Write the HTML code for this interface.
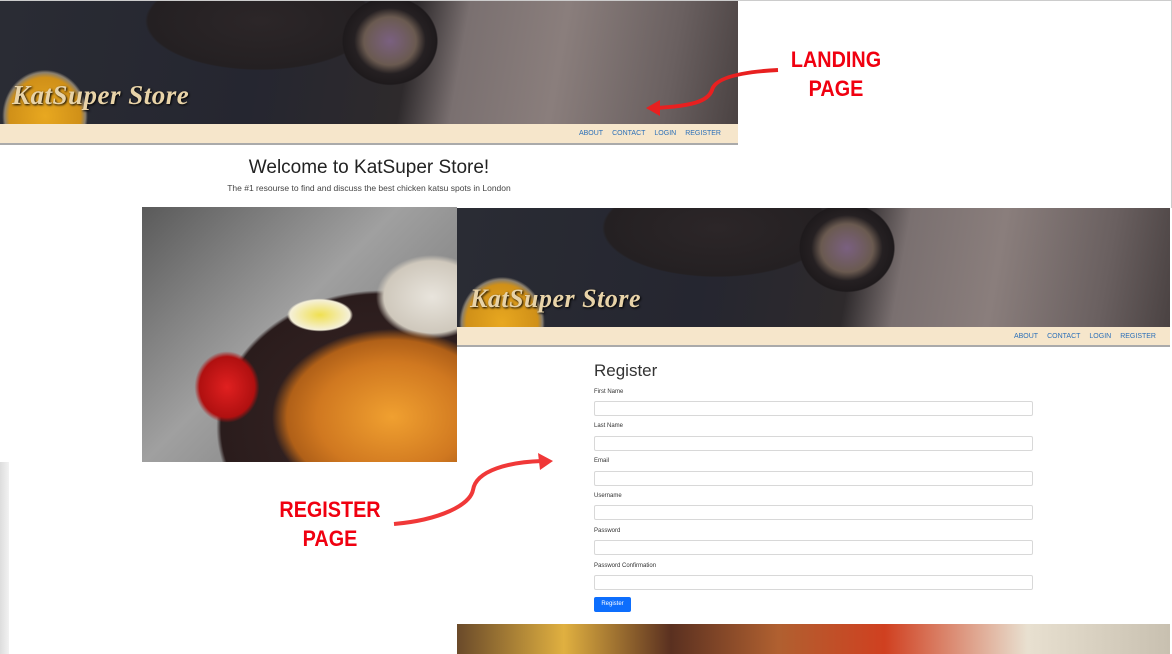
<!DOCTYPE html>
<html><head><meta charset="utf-8"><style>
*{margin:0;padding:0;box-sizing:border-box}
body{width:1172px;height:654px;position:relative;overflow:hidden;background:#fff;font-family:"Liberation Sans",sans-serif}
.abs{position:absolute}
.hdr{background:
radial-gradient(ellipse 65px 70px at 45px 115px,#e8a820 0,#d09018 55%,#8a8070 62%,transparent 66%),
radial-gradient(ellipse 65px 60px at 390px 40px,#7a6080 0,#6a5a50 40%,#252022 55%,#1e1a1c 72%,transparent 74%),
radial-gradient(ellipse 140px 60px at 260px 20px,#2c2628 0,#242022 80%,transparent 82%),
linear-gradient(100deg,#2a2c34 0,#252630 35%,#2e2a2c 55%,#7a7070 62%,#8a7e7c 75%,#6a6060 90%,#4a4242 100%);}
.logo{font-family:"Liberation Serif",serif;font-style:italic;font-weight:bold;color:#e8d3a8;letter-spacing:0.5px;text-shadow:1px 1px 2px #000}
.nav{background:#f6e6cb;border-bottom:2px solid #aaa;font-size:7px;color:#2a6fb8;text-align:right}
.nav span{margin-left:9px}
.red{color:#f00010;font-weight:bold;font-size:22px;text-align:center;line-height:29px;transform:scaleX(0.9)}
label{position:absolute;left:594px;font-size:6px;color:#333}
.in{position:absolute;left:594px;width:439px;height:15px;border:1px solid #d8d8d8;border-radius:2px;background:#fff}
</style></head><body>
<div class="abs" style="left:0;top:0;width:1172px;height:1px;background:#ccc"></div>
<div class="abs" style="left:1171px;top:0;width:1px;height:208px;background:#ccc"></div>
<div class="abs hdr" style="left:0;top:1px;width:738px;height:123px"></div>
<div class="abs logo" style="left:12px;top:80px;font-size:27px">KatSuper Store</div>
<div class="abs nav" style="left:0;top:124px;width:738px;height:21px;padding:6px 17px 0 0"><span>ABOUT</span><span>CONTACT</span><span>LOGIN</span><span>REGISTER</span></div>
<div class="abs" style="left:0;top:157px;width:738px;text-align:center;font-size:19px;color:#222">Welcome to KatSuper Store!</div>
<div class="abs" style="left:0;top:183px;width:738px;text-align:center;font-size:8.5px;color:#444">The #1 resourse to find and discuss the best chicken katsu spots in London</div>
<div class="abs" style="left:142px;top:207px;width:315px;height:255px;background:
radial-gradient(ellipse 60px 30px at 178px 108px,#f0e050 0,#f5f0d8 50%,transparent 55%),
radial-gradient(ellipse 50px 55px at 85px 180px,#e02020 0,#b01010 55%,transparent 65%),
radial-gradient(ellipse 150px 110px at 250px 210px,#f0a030 0,#d07820 50%,#b06018 70%,transparent 80%),
radial-gradient(ellipse 80px 60px at 290px 90px,#e8e4dc 0,#cfc8bc 60%,transparent 70%),
radial-gradient(ellipse 230px 190px at 240px 220px,#3a2626 0,#2a1c1c 70%,transparent 72%),
linear-gradient(135deg,#5a5a5a,#a0a0a0 45%,#6a6a6a)"></div>
<div class="abs" style="left:0;top:462px;width:9px;height:192px;background:linear-gradient(90deg,#ddd,#f2f2f2)"></div>
<div class="abs hdr" style="left:457px;top:208px;width:713px;height:119px"></div>
<div class="abs logo" style="left:470px;top:284px;font-size:26px">KatSuper Store</div>
<div class="abs nav" style="left:457px;top:327px;width:713px;height:20px;padding:6px 14px 0 0"><span>ABOUT</span><span>CONTACT</span><span>LOGIN</span><span>REGISTER</span></div>
<div class="abs" style="left:594px;top:361px;font-size:17px;color:#333">Register</div>
<label style="top:389px">First Name</label><div class="in" style="top:401px"></div>
<label style="top:423px">Last Name</label><div class="in" style="top:436px"></div>
<label style="top:458px">Email</label><div class="in" style="top:471px"></div>
<label style="top:493px">Username</label><div class="in" style="top:505px"></div>
<label style="top:528px">Password</label><div class="in" style="top:540px"></div>
<label style="top:563px">Password Confirmation</label><div class="in" style="top:575px"></div>
<div class="abs" style="left:594px;top:597px;width:37px;height:15px;background:#0d6efd;border-radius:2px;color:#fff;font-size:6px;text-align:center;line-height:15px">Register</div>
<div class="abs" style="left:457px;top:624px;width:713px;height:30px;background:linear-gradient(90deg,#6a4a2a,#e0b040 15%,#5a3020 30%,#b06030 45%,#d04020 60%,#e8e0d0 80%,#c8c0b0)"></div>
<div class="abs red" style="left:776px;top:45px;width:120px">LANDING<br>PAGE</div>
<div class="abs red" style="left:260px;top:495px;width:140px">REGISTER<br>PAGE</div>
<svg class="abs" style="left:0;top:0" width="1172" height="654">
<path d="M778 70 C740 72 715 78 712 90 C708 102 690 106 656 108" fill="none" stroke="#e82020" stroke-width="4"/>
<polygon points="646,108 660,100 660,116" fill="#e82020"/>
<path d="M394 524 C440 520 470 505 473 490 C476 470 510 462 542 461" fill="none" stroke="#f03838" stroke-width="4"/>
<polygon points="553,461 538,453 540,470" fill="#f03838"/>
</svg>
</body></html>
